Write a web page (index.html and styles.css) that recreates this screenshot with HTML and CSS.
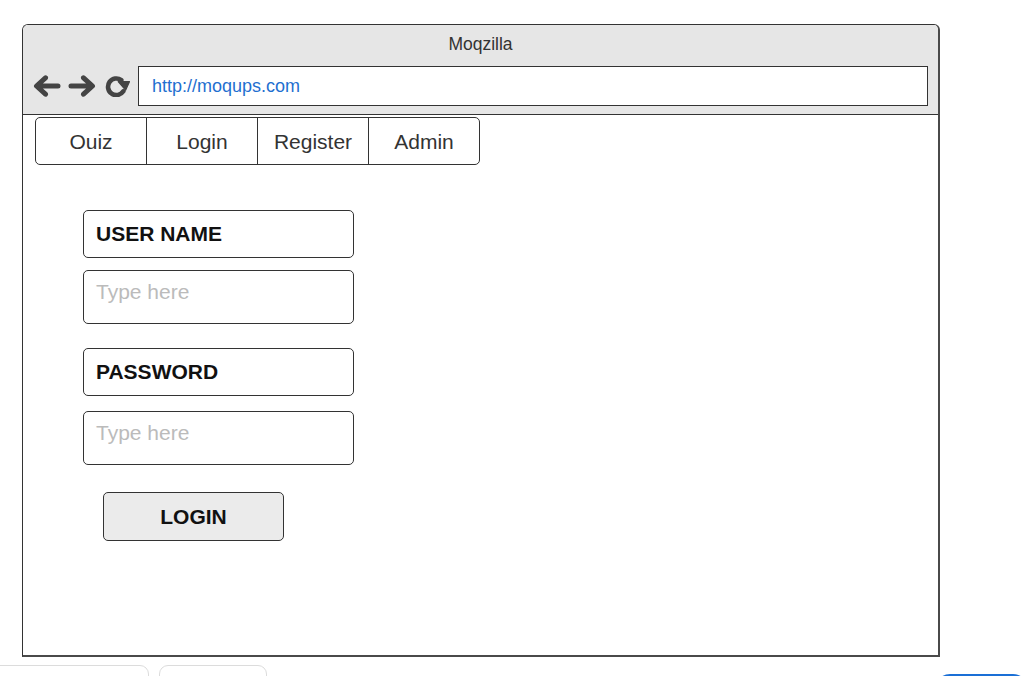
FILE: index.html
```html
<!DOCTYPE html>
<html lang="en">
<head>
<meta charset="utf-8">
<title>Moqzilla</title>
<link rel="stylesheet" href="styles.css">
</head>
<body>
<div class="page">
  <div class="window">
    <div class="chrome">
      <div class="title">Moqzilla</div>
      <div class="navrow">
        <svg class="ico back" width="28" height="22" viewBox="0 0 28 22"><path d="M25 11 H5 M12.5 2.8 L3.5 11 L12.5 19.2" fill="none" stroke="#444" stroke-width="5" stroke-linecap="round" stroke-linejoin="round"/></svg>
        <svg class="ico fwd" width="28" height="22" viewBox="0 0 28 22"><path d="M3 11 H23 M15.5 2.8 L24.5 11 L15.5 19.2" fill="none" stroke="#444" stroke-width="5" stroke-linecap="round" stroke-linejoin="round"/></svg>
        <svg class="ico reload" width="25" height="22" viewBox="0 0 25 22"><path d="M16.3 5.1 A8.3 8.3 0 1 0 18.3 16.3" fill="none" stroke="#444" stroke-width="4.6" stroke-linecap="round"/><path d="M13.2 6.6 L24.5 6.6 L20.6 15.2 Z" fill="#444" stroke="#444" stroke-width="1.2" stroke-linejoin="round"/></svg>
        <div class="url">http://moqups.com</div>
      </div>
    </div>
    <div class="content">
      <div class="tabs">
        <div class="tab">Ouiz</div>
        <div class="tab">Login</div>
        <div class="tab">Register</div>
        <div class="tab">Admin</div>
      </div>
      <div class="form">
        <div class="label">USER NAME</div>
        <div class="input gap-s">Type here</div>
        <div class="label gap-m">PASSWORD</div>
        <div class="input gap-t">Type here</div>
        <div class="btn">LOGIN</div>
      </div>
    </div>
  </div>
  <div class="bottombar">
    <div class="chip chip1"></div>
    <div class="chip chip2"></div>
    <div class="pill"></div>
  </div>
</div>
</body>
</html>
```

FILE: styles.css
```css
* { box-sizing: border-box; }
html, body {
  margin: 0;
  padding: 0;
  background: #fff;
  overflow: hidden;
  height: 676px;
}
body {
  font-family: "Liberation Sans", Arial, sans-serif;
  color: #333;
}
.page {
  padding: 24px 0 0 22px;
  display: flex;
  flex-direction: column;
}
.window {
  width: 918px;
  height: 633px;
  border: 1px solid #333;
  border-right: 2px solid #4a4a4a;
  border-bottom: 2px solid #4a4a4a;
  border-radius: 6px 6px 0 0;
  display: flex;
  flex-direction: column;
  overflow: hidden;
}
.chrome {
  background: #e6e6e6;
  border-bottom: 1px solid #333;
  height: 90px;
  display: flex;
  flex-direction: column;
}
.title {
  text-align: center;
  font-size: 17.5px;
  line-height: 20px;
  padding-top: 9px;
  color: #333;
}
.navrow {
  display: flex;
  align-items: center;
  margin-top: 12px;
  padding-left: 10px;
  padding-right: 10px;
}
.ico { display: block; flex: none; }
.fwd { margin-left: 7px; }
.reload { margin-left: 9px; }
.url {
  margin-left: 8px;
  flex: 1;
  height: 40px;
  background: #fff;
  border: 1.5px solid #333;
  color: #1f6fd0;
  font-size: 18px;
  line-height: 38px;
  padding-left: 13px;
}
.content {
  flex: 1;
  padding: 2px 0 0 12px;
  display: flex;
  flex-direction: column;
}
.tabs {
  display: flex;
  width: 445px;
  height: 48px;
  border: 1px solid #333;
  border-radius: 5px;
  overflow: hidden;
}
.tab {
  flex: 1;
  text-align: center;
  font-size: 21px;
  line-height: 46px;
  padding-top: 1px;
  color: #333;
  border-left: 1px solid #333;
}
.tab:first-child { border-left: none; }
.form {
  margin-top: 45px;
  margin-left: 48px;
  display: flex;
  flex-direction: column;
  width: 271px;
}
.label {
  height: 48px;
  border: 1px solid #333;
  border-radius: 5px;
  font-weight: bold;
  font-size: 21px;
  line-height: 46px;
  padding-left: 12px;
  color: #111;
}
.input {
  height: 54px;
  border: 1px solid #333;
  border-radius: 5px;
  font-size: 21px;
  line-height: 24px;
  padding: 9px 0 0 12px;
  color: #bbb;
}
.gap-s { margin-top: 12px; }
.gap-m { margin-top: 24px; }
.gap-t { margin-top: 15px; }
.btn {
  margin-top: 27px;
  margin-left: 20px;
  width: 181px;
  height: 49px;
  background: #ebebeb;
  border: 1px solid #333;
  border-radius: 5px;
  font-weight: bold;
  font-size: 21px;
  line-height: 47px;
  text-align: center;
  color: #111;
}
.bottombar {
  display: flex;
  margin-left: -22px;
  margin-top: 8px;
  align-items: flex-start;
}
.chip {
  height: 30px;
  border: 1px solid #dcdcdc;
  border-radius: 9px;
  background: #fff;
}
.chip1 { width: 169px; margin-left: -20px; }
.chip2 { width: 108px; margin-left: 10px; }
.pill {
  margin-left: auto;
  margin-right: 2px;
  margin-top: 9px;
  width: 93px;
  height: 30px;
  border-radius: 15px;
  background: #1a6fd6;
}
```
